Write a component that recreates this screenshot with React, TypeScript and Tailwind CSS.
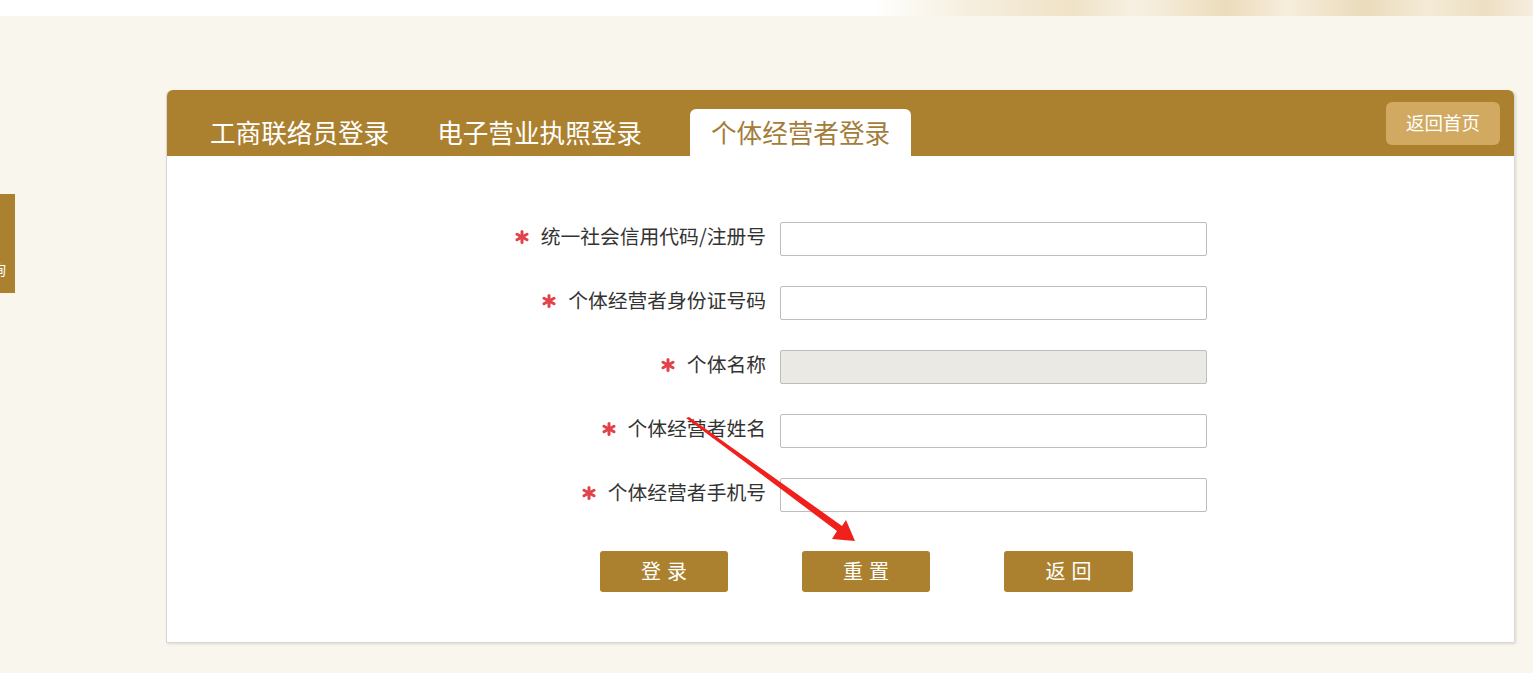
import React from "react";

const font = { fontFamily: '"Noto Sans CJK SC", "Noto Sans", sans-serif' };

const rows: { label: string; disabled?: boolean }[] = [
  { label: "统一社会信用代码/注册号" },
  { label: "个体经营者身份证号码" },
  { label: "个体名称", disabled: true },
  { label: "个体经营者姓名" },
  { label: "个体经营者手机号" },
];

function Star() {
  return (
    <svg width="14" height="14" viewBox="0 0 14 14" className="mr-[12px] relative top-[1px]">
      <g stroke="#e2424a" strokeWidth="3" strokeLinecap="round">
        <line x1="7" y1="1.5" x2="7" y2="12.5" />
        <line x1="2" y1="4.2" x2="12" y2="9.8" />
        <line x1="2" y1="9.8" x2="12" y2="4.2" />
      </g>
    </svg>
  );
}

export default function App() {
  return (
    <div
      className="relative w-[1533px] h-[673px] overflow-hidden bg-[#f9f6ee]"
      style={font}
    >
      {/* top band */}
      <div className="h-[16px] w-full bg-[linear-gradient(90deg,#ffffff_0%,#ffffff_57%,#f6efe0_63%,#efe2c6_70%,#f7f0e2_74%,#ecdcbc_80%,#f6eddc_84%,#eadbbb_89%,#f4ead6_93%,#eddfc2_97%,#f6eee0_100%)]" />

      {/* left floating tab */}
      <div className="absolute left-0 top-[194px] w-[15px] h-[99px] bg-[#ab812f] overflow-hidden">
        <span className="absolute left-[-8px] top-[68px] text-[14px] leading-[14px] text-white">询</span>
      </div>

      {/* card */}
      <div className="ml-[166px] mt-[74px] w-[1349px] rounded-t-[6px] bg-white border border-t-0 border-[#d8d8d8] shadow-[1px_1px_3px_rgba(0,0,0,0.12)]">
        <div className="flex items-end h-[66px] rounded-t-[6px] bg-[#ab812f] pl-[43px] pr-[14px]">
          <div className="flex items-end gap-[48px] flex-1">
            <div className="h-[47px] flex items-center pb-[2px] text-[25.6px] text-white leading-none">工商联络员登录</div>
            <div className="h-[47px] flex items-center pb-[2px] text-[25.6px] text-white leading-none">电子营业执照登录</div>
            <div className="h-[47px] flex items-center pb-[2px] px-[21px] rounded-t-[6px] bg-white text-[25.6px] text-[#a47c3a] leading-none">个体经营者登录</div>
          </div>
          <div className="self-start mt-[12px] w-[114px] h-[43px] rounded-[6px] bg-[#d1a960] flex items-center justify-center pb-[2px] text-[18.5px] text-white">
            返回首页
          </div>
        </div>

        <div className="pt-[66px] pb-[50px]">
          <div className="flex flex-col gap-[30px]">
            {rows.map((r) => (
              <div key={r.label} className="flex items-center">
                <div className="w-[599px] flex items-center justify-end text-[19.8px] text-[#333] leading-none relative -top-[3px]">
                  <Star />
                  <span>{r.label}</span>
                </div>
                <div
                  className={
                    "ml-[14px] w-[427px] h-[34px] rounded-[2px] border border-[#bdbdbd] " +
                    (r.disabled ? "bg-[#ebe9e3]" : "bg-white")
                  }
                />
              </div>
            ))}
          </div>
          <div className="flex gap-[74px] pl-[433px] mt-[39px]">
            <div className="w-[128px] h-[41px] rounded-[3px] bg-[#ab812f] flex items-center justify-center pb-[2px] text-[20px] text-white tracking-[6px] pl-[6px]">登录</div>
            <div className="w-[128px] h-[41px] rounded-[3px] bg-[#ab812f] flex items-center justify-center pb-[2px] text-[20px] text-white tracking-[6px] pl-[6px]">重置</div>
            <div className="w-[129px] h-[41px] rounded-[3px] bg-[#ab812f] flex items-center justify-center pb-[2px] text-[20px] text-white tracking-[6px] pl-[6px]">返回</div>
          </div>
        </div>
      </div>

      {/* red annotation arrow */}
      <svg className="absolute left-0 top-0 pointer-events-none" width="1533" height="673">
        <polygon points="686,418 689,417 842,526 846,520 855,541 832,539 837,531" fill="#f0201c" />
      </svg>
    </div>
  );
}
